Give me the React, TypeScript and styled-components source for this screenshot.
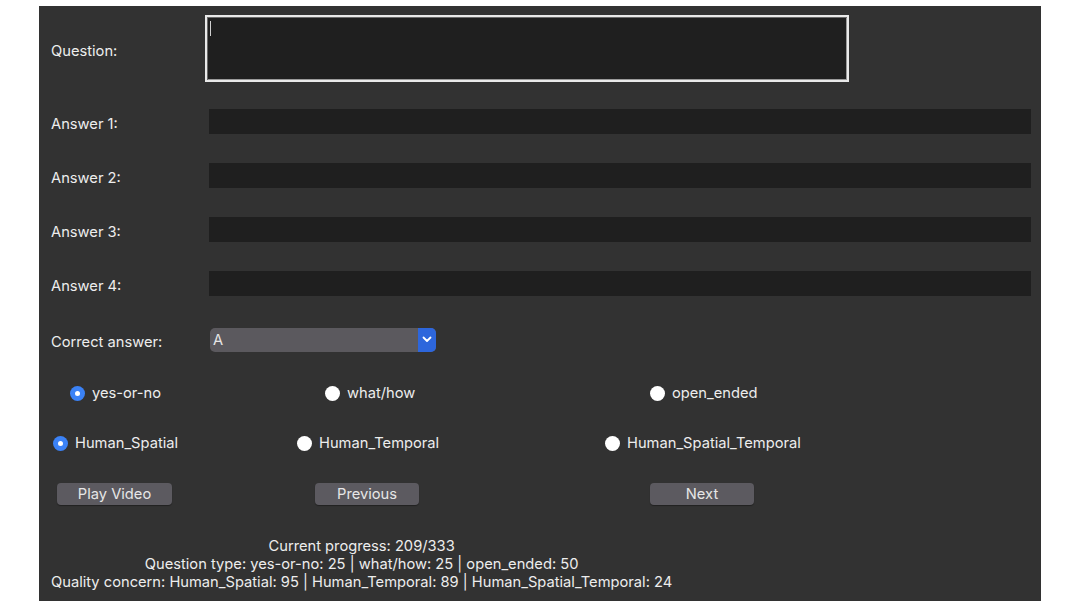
import React from "react";
import styled, { createGlobalStyle } from "styled-components";

const Global = createGlobalStyle`
  html, body { margin: 0; padding: 0; background: #ffffff; }
  body { font-family: Inter, "Liberation Sans", Arial, sans-serif; }
  * { box-sizing: border-box; }
`;

const Panel = styled.div`
  margin: 6px 0 0 39px;
  width: 1002px;
  height: 595px;
  background: #323232;
  padding: 9px 10px 0 12px;
  display: flex;
  flex-direction: column;
  color: #e8e8e8;
  font-size: 14.7px;
`;

const FieldRow = styled.div<{ $h: number }>`
  display: flex;
  align-items: center;
  height: ${(p) => p.$h}px;
`;

const Label = styled.div`
  width: 158px;
  flex: none;
  color: #ededed;
  padding-top: 5px;
`;

const QuestionBox = styled.div`
  margin-left: -4px;
  width: 644px;
  height: 67px;
  background: #1f1f1f;
  border: 2px solid #e9e9e9;
  box-shadow: inset 1px 1px 0 #6a6a6a, inset -1px -1px 0 #9a9a9a;
  padding: 4px 0 0 3px;
`;

const Caret = styled.div`
  width: 1px;
  height: 15px;
  background: #d0d0d0;
`;

const AnswerField = styled.div`
  flex: 1;
  height: 25px;
  background: #1f1f1f;
`;

const Select = styled.div`
  margin-left: 1px;
  width: 226px;
  height: 24px;
  border-radius: 5px;
  background: #5b595e;
  display: flex;
  align-items: center;
  overflow: hidden;
`;

const SelectValue = styled.span`
  flex: 1;
  padding-left: 3px;
  color: #e6e6e6;
`;

const Chevron = styled.div`
  width: 18px;
  height: 100%;
  background: #2d66dc;
  display: flex;
  align-items: center;
  justify-content: center;
`;

const OptionRow = styled.div<{ $h: number; $pad: number }>`
  display: flex;
  align-items: center;
  height: ${(p) => p.$h}px;
  padding-left: ${(p) => p.$pad}px;
`;

const Option = styled.div<{ $w?: number }>`
  display: flex;
  align-items: center;
  gap: 7px;
  width: ${(p) => (p.$w ? `${p.$w}px` : "auto")};
  flex: none;
  color: #ededed;
`;

const Radio = styled.span<{ $on?: boolean }>`
  width: 15px;
  height: 15px;
  border-radius: 50%;
  flex: none;
  background: ${(p) => (p.$on ? "#3b82f6" : "#ffffff")};
  display: flex;
  align-items: center;
  justify-content: center;
  &::after {
    content: "";
    width: 5px;
    height: 5px;
    border-radius: 50%;
    background: #ffffff;
    display: ${(p) => (p.$on ? "block" : "none")};
  }
`;

const ButtonRow = styled.div`
  display: flex;
  align-items: center;
  height: 49px;
  padding-left: 6px;
`;

const Button = styled.div<{ $w: number; $gap: number }>`
  width: ${(p) => p.$w}px;
  margin-right: ${(p) => p.$gap}px;
  height: 22px;
  flex: none;
  border-radius: 4px;
  background: #5c5a60;
  color: #e6e6e6;
  display: flex;
  align-items: center;
  justify-content: center;
  padding-top: 1px;
  box-shadow: 0 1px 1px rgba(0, 0, 0, 0.35);
`;

const Stats = styled.div`
  margin-top: 19px;
  align-self: flex-start;
  text-align: center;
  line-height: 18px;
  color: #ededed;
`;

export default function App() {
  const answers = ["Answer 1:", "Answer 2:", "Answer 3:", "Answer 4:"];
  return (
    <>
      <Global />
      <Panel>
        <FieldRow $h={67}>
          <Label>Question:</Label>
          <QuestionBox>
            <Caret />
          </QuestionBox>
        </FieldRow>
        <FieldRow $h={12} />
        {answers.map((a) => (
          <FieldRow key={a} $h={54}>
            <Label>{a}</Label>
            <AnswerField />
          </FieldRow>
        ))}
        <FieldRow $h={59}>
          <Label>Correct answer:</Label>
          <Select>
            <SelectValue>A</SelectValue>
            <Chevron>
              <svg width="10" height="7" viewBox="0 0 10 7">
                <path d="M1.5 1.5 L5 5 L8.5 1.5" fill="none" stroke="#fff" strokeWidth="1.8" strokeLinecap="round" strokeLinejoin="round" />
              </svg>
            </Chevron>
          </Select>
        </FieldRow>
        <OptionRow $h={48} $pad={19}>
          <Option $w={255}>
            <Radio $on />
            yes-or-no
          </Option>
          <Option $w={325}>
            <Radio />
            what/how
          </Option>
          <Option>
            <Radio />
            open_ended
          </Option>
        </OptionRow>
        <OptionRow $h={52} $pad={2}>
          <Option $w={244}>
            <Radio $on />
            Human_Spatial
          </Option>
          <Option $w={308}>
            <Radio />
            Human_Temporal
          </Option>
          <Option>
            <Radio />
            Human_Spatial_Temporal
          </Option>
        </OptionRow>
        <ButtonRow>
          <Button $w={115} $gap={143}>Play Video</Button>
          <Button $w={104} $gap={231}>Previous</Button>
          <Button $w={104} $gap={0}>Next</Button>
        </ButtonRow>
        <Stats>
          Current progress: 209/333
          <br />
          Question type: yes-or-no: 25 | what/how: 25 | open_ended: 50
          <br />
          Quality concern: Human_Spatial: 95 | Human_Temporal: 89 | Human_Spatial_Temporal: 24
        </Stats>
      </Panel>
    </>
  );
}
